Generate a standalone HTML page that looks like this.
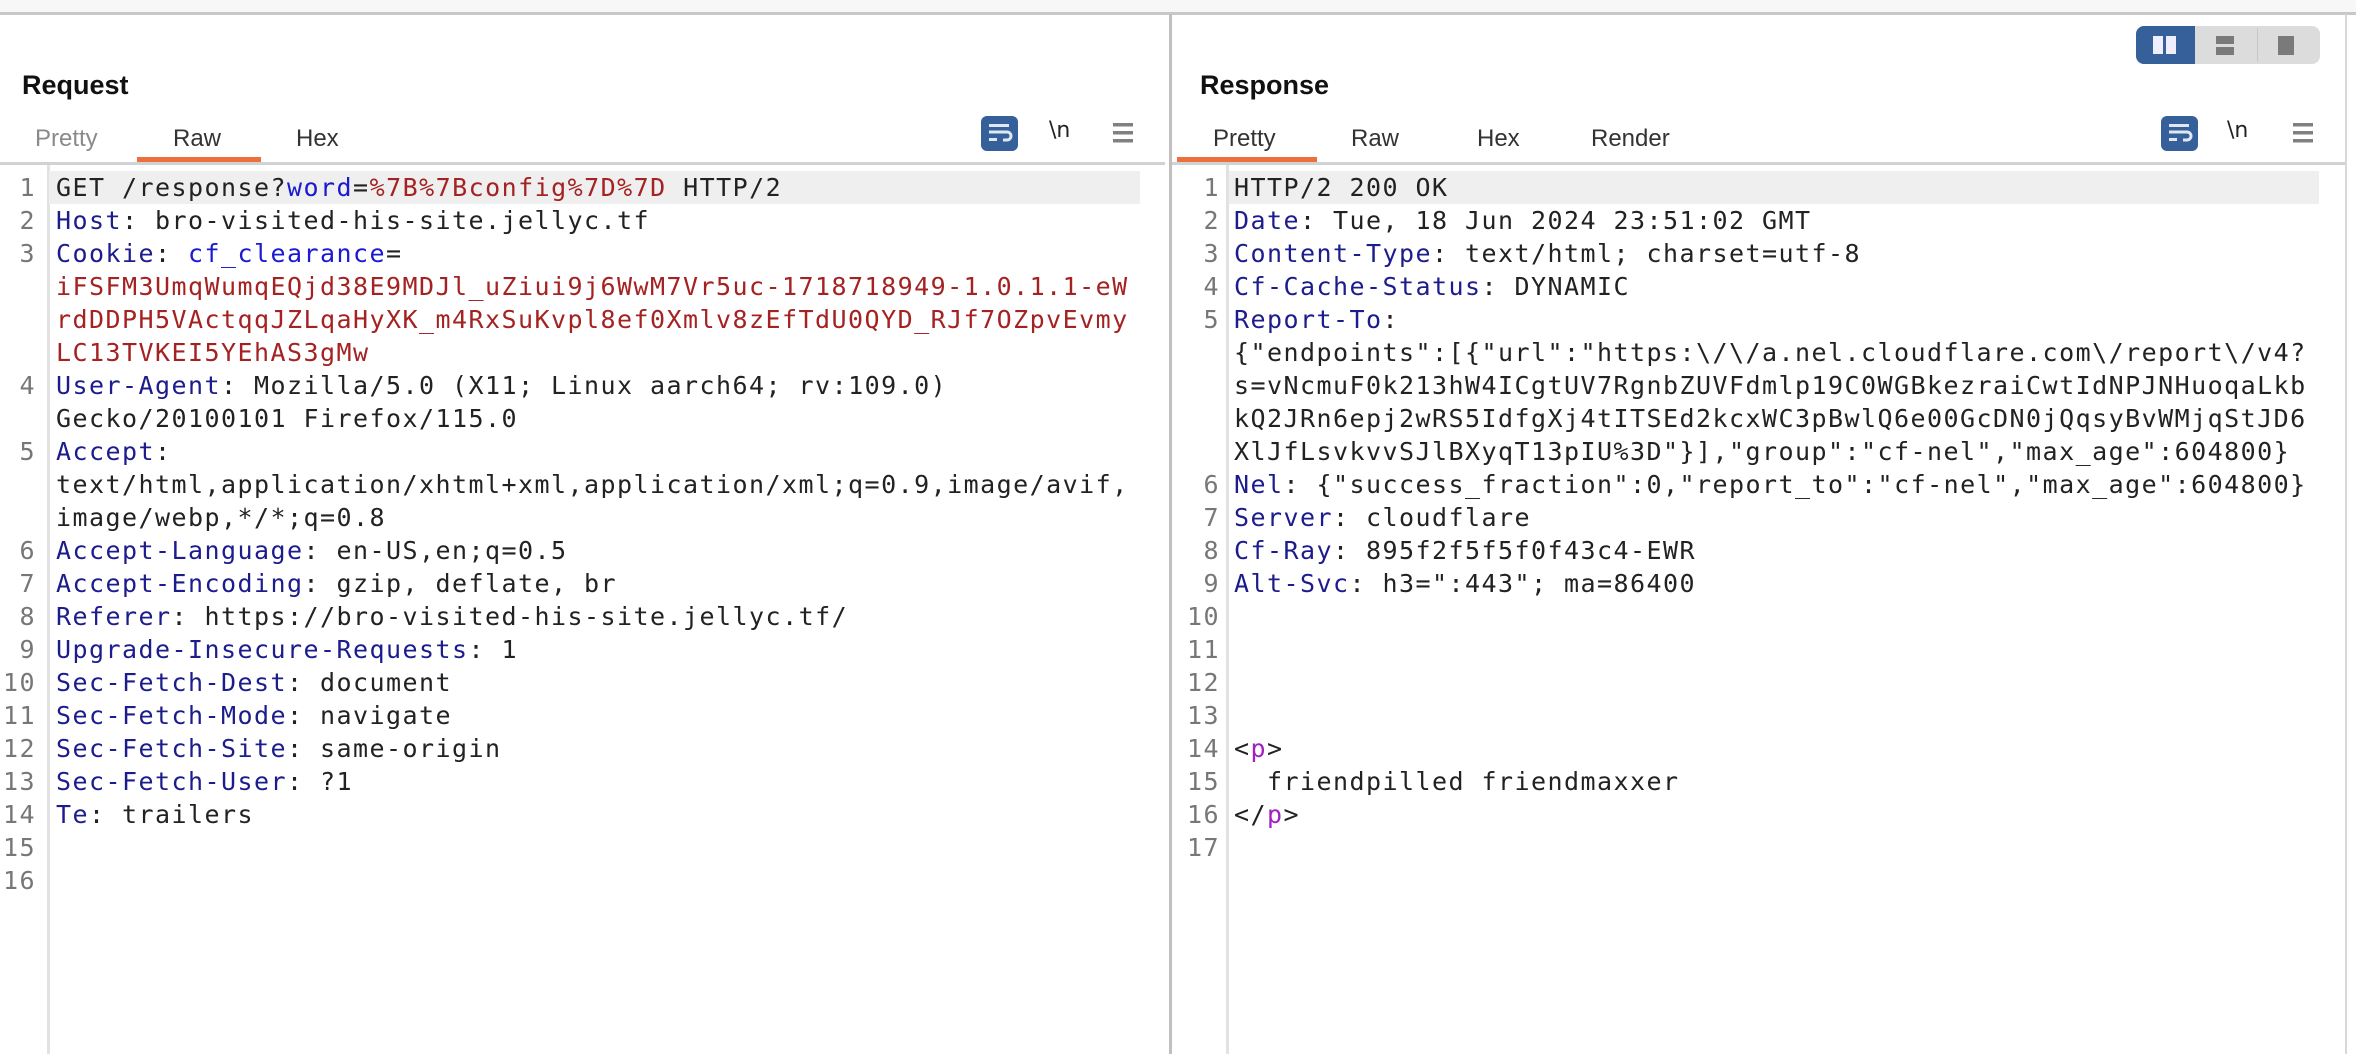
<!DOCTYPE html>
<html><head><meta charset="utf-8"><style>
*{margin:0;padding:0;box-sizing:border-box}
body{width:2356px;height:1054px;background:#fff;position:relative;overflow:hidden;font-family:"Liberation Sans",sans-serif}
.abs{position:absolute}
.title{font-weight:bold;font-size:27px;color:#111;top:70px}
.tab{font-size:24px;color:#333;top:125px}
.code{font-family:"DejaVu Sans Mono","Liberation Mono",monospace;font-size:25px;letter-spacing:1.45px;white-space:normal;line-height:33px}
.code .t div{white-space:pre;height:33px}
.row{position:absolute;height:33px;line-height:33px}
.ln{color:#777;text-align:right;width:60px}
.h{color:#1c1c8c}.b{color:#1a1ad0}.r{color:#a52222}.k{color:#222}.p{color:#a020c0}
</style></head><body>
<div class="abs" style="left:0;top:0;width:2356px;height:13px;background:#f7f7f7"></div>
<div class="abs" style="left:0;top:12px;width:2356px;height:3px;background:#c8c8c8"></div>
<div class="abs" style="left:1169px;top:14px;width:3px;height:1040px;background:#c4bfbf"></div>
<div class="abs" style="left:2345px;top:14px;width:2px;height:1040px;background:#d8d8d8"></div>

<div class="abs title" style="left:22px">Request</div>
<div class="abs title" style="left:1200px">Response</div>

<div class="abs tab" style="left:35px;color:#8a8a8a">Pretty</div>
<div class="abs tab" style="left:173px">Raw</div>
<div class="abs tab" style="left:296px">Hex</div>
<div class="abs" style="left:137px;top:157px;width:124px;height:5px;background:#ec6f3c"></div>
<div class="abs" style="left:0;top:162px;width:1165px;height:3px;background:#d0d3d3"></div>

<div class="abs tab" style="left:1213px">Pretty</div>
<div class="abs tab" style="left:1351px">Raw</div>
<div class="abs tab" style="left:1477px">Hex</div>
<div class="abs tab" style="left:1591px">Render</div>
<div class="abs" style="left:1177px;top:157px;width:140px;height:5px;background:#ec6f3c"></div>
<div class="abs" style="left:1172px;top:162px;width:1173px;height:3px;background:#d0d3d3"></div>

<svg class="abs" style="left:981px;top:116px" width="37" height="35"><rect width="37" height="35" rx="6" fill="#36609a"/><rect x="8" y="8" width="20" height="3" fill="#dfe7f2"/><path d="M8 16h18a4 4 0 0 1 0 8h-4" stroke="#dfe7f2" stroke-width="3" fill="none"/><rect x="8" y="22" width="8" height="3" fill="#dfe7f2"/></svg>
<div class="abs" style="left:1049px;top:118px;font-size:22px;color:#222;font-family:'DejaVu Sans',sans-serif">\n</div>
<svg class="abs" style="left:1113px;top:123px" width="20" height="20"><rect y="0" width="20" height="3.5" fill="#808080"/><rect y="8" width="20" height="3.5" fill="#808080"/><rect y="16" width="20" height="3.5" fill="#808080"/></svg>
<svg class="abs" style="left:2161px;top:116px" width="37" height="35"><rect width="37" height="35" rx="6" fill="#36609a"/><rect x="8" y="8" width="20" height="3" fill="#dfe7f2"/><path d="M8 16h18a4 4 0 0 1 0 8h-4" stroke="#dfe7f2" stroke-width="3" fill="none"/><rect x="8" y="22" width="8" height="3" fill="#dfe7f2"/></svg>
<div class="abs" style="left:2227px;top:118px;font-size:22px;color:#222;font-family:'DejaVu Sans',sans-serif">\n</div>
<svg class="abs" style="left:2293px;top:123px" width="20" height="20"><rect y="0" width="20" height="3.5" fill="#808080"/><rect y="8" width="20" height="3.5" fill="#808080"/><rect y="16" width="20" height="3.5" fill="#808080"/></svg>

<svg class="abs" style="left:2136px;top:26px" width="184" height="38"><rect width="184" height="38" rx="8" fill="#dcdcdc"/><path d="M8 0h51v38h-51a8 8 0 0 1-8-8v-22a8 8 0 0 1 8-8z" fill="#36609a"/><rect x="121" y="2" width="1" height="34" fill="#c8c8c8"/><rect x="17" y="10" width="10" height="18" fill="#eef"/><rect x="30" y="10" width="10" height="18" fill="#eef"/><rect x="80" y="10" width="18" height="8" fill="#7a7a7a"/><rect x="80" y="21" width="18" height="8" fill="#7a7a7a"/><rect x="142" y="10" width="16" height="19" fill="#7a7a7a"/></svg>

<div class="abs" style="left:47px;top:165px;width:3px;height:889px;background:#e2e2e2"></div>
<div class="abs" style="left:1226px;top:165px;width:3px;height:889px;background:#e2e2e2"></div>
<div class="abs" style="left:49px;top:171px;width:1091px;height:33px;background:#efefef"></div>
<div class="abs" style="left:1229px;top:171px;width:1090px;height:33px;background:#efefef"></div>

<div class="code abs" style="left:0;top:171px;width:1165px">
<div class="row ln" style="left:-24px;top:0">1</div>
<div class="row ln" style="left:-24px;top:33px">2</div>
<div class="row ln" style="left:-24px;top:66px">3</div>
<div class="row ln" style="left:-24px;top:198px">4</div>
<div class="row ln" style="left:-24px;top:264px">5</div>
<div class="row ln" style="left:-24px;top:363px">6</div>
<div class="row ln" style="left:-24px;top:396px">7</div>
<div class="row ln" style="left:-24px;top:429px">8</div>
<div class="row ln" style="left:-24px;top:462px">9</div>
<div class="row ln" style="left:-24px;top:495px">10</div>
<div class="row ln" style="left:-24px;top:528px">11</div>
<div class="row ln" style="left:-24px;top:561px">12</div>
<div class="row ln" style="left:-24px;top:594px">13</div>
<div class="row ln" style="left:-24px;top:627px">14</div>
<div class="row ln" style="left:-24px;top:660px">15</div>
<div class="row ln" style="left:-24px;top:693px">16</div>
<div style="position:absolute;left:56px;top:0" class="k t">
<div>GET /response?<span class="b">word</span>=<span class="r">%7B%7Bconfig%7D%7D</span> HTTP/2</div>
<div><span class="h">Host</span>: bro-visited-his-site.jellyc.tf</div>
<div><span class="h">Cookie</span>: <span class="b">cf_clearance</span>=</div>
<div class="r">iFSFM3UmqWumqEQjd38E9MDJl_uZiui9j6WwM7Vr5uc-1718718949-1.0.1.1-eW</div>
<div class="r">rdDDPH5VActqqJZLqaHyXK_m4RxSuKvpl8ef0Xmlv8zEfTdU0QYD_RJf7OZpvEvmy</div>
<div class="r">LC13TVKEI5YEhAS3gMw</div>
<div><span class="h">User-Agent</span>: Mozilla/5.0 (X11; Linux aarch64; rv:109.0)</div>
<div>Gecko/20100101 Firefox/115.0</div>
<div><span class="h">Accept</span>:</div>
<div>text/html,application/xhtml+xml,application/xml;q=0.9,image/avif,</div>
<div>image/webp,*/*;q=0.8</div>
<div><span class="h">Accept-Language</span>: en-US,en;q=0.5</div>
<div><span class="h">Accept-Encoding</span>: gzip, deflate, br</div>
<div><span class="h">Referer</span>: https://bro-visited-his-site.jellyc.tf/</div>
<div><span class="h">Upgrade-Insecure-Requests</span>: 1</div>
<div><span class="h">Sec-Fetch-Dest</span>: document</div>
<div><span class="h">Sec-Fetch-Mode</span>: navigate</div>
<div><span class="h">Sec-Fetch-Site</span>: same-origin</div>
<div><span class="h">Sec-Fetch-User</span>: ?1</div>
<div><span class="h">Te</span>: trailers</div>
</div>
</div>

<div class="code abs" style="left:1172px;top:171px;width:1173px">
<div class="row ln" style="left:-12px;top:0">1</div>
<div class="row ln" style="left:-12px;top:33px">2</div>
<div class="row ln" style="left:-12px;top:66px">3</div>
<div class="row ln" style="left:-12px;top:99px">4</div>
<div class="row ln" style="left:-12px;top:132px">5</div>
<div class="row ln" style="left:-12px;top:297px">6</div>
<div class="row ln" style="left:-12px;top:330px">7</div>
<div class="row ln" style="left:-12px;top:363px">8</div>
<div class="row ln" style="left:-12px;top:396px">9</div>
<div class="row ln" style="left:-12px;top:429px">10</div>
<div class="row ln" style="left:-12px;top:462px">11</div>
<div class="row ln" style="left:-12px;top:495px">12</div>
<div class="row ln" style="left:-12px;top:528px">13</div>
<div class="row ln" style="left:-12px;top:561px">14</div>
<div class="row ln" style="left:-12px;top:594px">15</div>
<div class="row ln" style="left:-12px;top:627px">16</div>
<div class="row ln" style="left:-12px;top:660px">17</div>
<div style="position:absolute;left:62px;top:0" class="k t">
<div>HTTP/2 200 OK</div>
<div><span class="h">Date</span>: Tue, 18 Jun 2024 23:51:02 GMT</div>
<div><span class="h">Content-Type</span>: text/html; charset=utf-8</div>
<div><span class="h">Cf-Cache-Status</span>: DYNAMIC</div>
<div><span class="h">Report-To</span>:</div>
<div>{"endpoints":[{"url":"https:\/\/a.nel.cloudflare.com\/report\/v4?</div>
<div>s=vNcmuF0k213hW4ICgtUV7RgnbZUVFdmlp19C0WGBkezraiCwtIdNPJNHuoqaLkb</div>
<div>kQ2JRn6epj2wRS5IdfgXj4tITSEd2kcxWC3pBwlQ6e00GcDN0jQqsyBvWMjqStJD6</div>
<div>XlJfLsvkvvSJlBXyqT13pIU%3D"}],"group":"cf-nel","max_age":604800}</div>
<div><span class="h">Nel</span>: {"success_fraction":0,"report_to":"cf-nel","max_age":604800}</div>
<div><span class="h">Server</span>: cloudflare</div>
<div><span class="h">Cf-Ray</span>: 895f2f5f5f0f43c4-EWR</div>
<div><span class="h">Alt-Svc</span>: h3=":443"; ma=86400</div>
<div> </div><div> </div><div> </div><div> </div>
<div>&lt;<span class="p">p</span>&gt;</div>
<div>  friendpilled friendmaxxer</div>
<div>&lt;/<span class="p">p</span>&gt;</div>
</div>
</div>
</body></html>
